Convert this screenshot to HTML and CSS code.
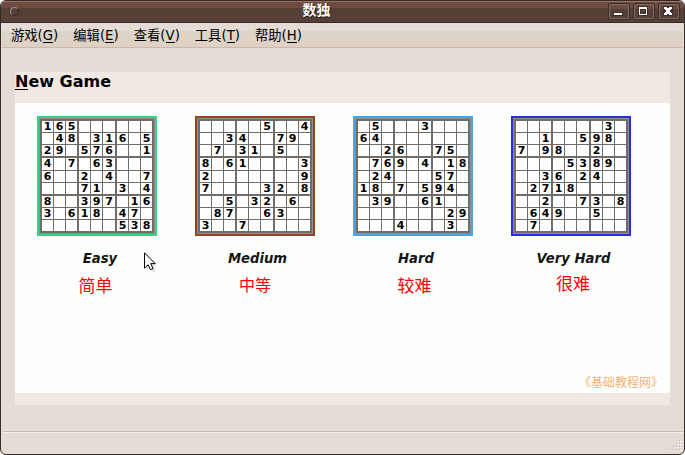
FILE: index.html
```html
<!DOCTYPE html>
<html lang="zh-CN">
<head>
<meta charset="utf-8">
<title>数独</title>
<link rel="stylesheet" href="styles.css">
</head>
<body>
<div class="window">
  <header class="titlebar">
    <span class="window-menu"></span>
    <span class="title">数独</span>
    <div class="controls">
      <span class="control"><svg width="20" height="15" shape-rendering="crispEdges"><path d="M4 8h10v4H4z" fill="#3c302c"/><path d="M5 9h8v2H5z" fill="#fff"/></svg></span>
      <span class="control"><svg width="20" height="15" shape-rendering="crispEdges"><path d="M4 2h10v10H4z" fill="#3c302c"/><path d="M5 3h8v8H5zM6 5v5h6V5z" fill="#fff" fill-rule="evenodd"/><path d="M7 6h4v3H7z" fill="#564038"/></svg></span>
      <span class="control"><svg width="20" height="15" shape-rendering="crispEdges"><path d="M4 2h10v10H4z" fill="#3c302c"/><path d="M5 3h3v1h2V3h3v2h-1v1h-1v2h1v1h1v2h-3v-1H8v1H5V9h1V8h1V6H6V5H5z" fill="#fff"/></svg></span>
    </div>
  </header>
  <nav class="menubar">
    <span class="menu">游戏<span class="key">(<u>G</u>)</span></span>
    <span class="menu">编辑<span class="key">(<u>E</u>)</span></span>
    <span class="menu">查看<span class="key">(<u>V</u>)</span></span>
    <span class="menu">工具<span class="key">(<u>T</u>)</span></span>
    <span class="menu">帮助<span class="key">(<u>H</u>)</span></span>
  </nav>
  <main class="panel">
    <h1 class="heading"><u>N</u>ew Game</h1>
    <section class="levels">
      <div class="level easy"><div class="board" data-puzzle="165......|.48.316.5|29.576..1|4.7.63...|6..2.4..7|...71.3.4|8..397.16|3.618.47.|......538"></div><span class="name">Easy</span><span class="note">简单</span></div>
      <div class="level medium"><div class="board" data-puzzle=".....5..4|..34..79.|.7.31.5..|8.61....3|2.......9|7....32.8|..5.32.6.|.87..63..|3..7....."></div><span class="name">Medium</span><span class="note">中等</span></div>
      <div class="level hard"><div class="board" data-puzzle=".5...3...|64.......|..26..75.|.769.4.18|.24...57.|18.7.594.|.39..61..|.......29|...4...3."></div><span class="name">Hard</span><span class="note">较难</span></div>
      <div class="level very-hard"><div class="board" data-puzzle=".......3.|..1..598.|7.98..2..|....5389.|..36.24..|.2718....|..2..73.8|.649..5..|.7......."></div><span class="name">Very Hard</span><span class="note">很难</span></div>
      <span class="credit">《基础教程网》</span>
    </section>
  </main>
  <footer class="statusbar">
    <svg class="grip" width="12" height="12" shape-rendering="crispEdges"><path d="M9 0h1v1h-1zM6 3h1v1H6zM9 3h1v1H9zM3 6h1v1H3zM6 6h1v1H6zM9 6h1v1H9zM0 9h1v1H0zM3 9h1v1H3zM6 9h1v1H6zM9 9h1v1H9z" fill="#bdb1a9"/><path d="M10 1h1v1h-1zM7 4h1v1H7zM10 4h1v1h-1zM4 7h1v1H4zM7 7h1v1H7zM10 7h1v1h-1zM1 10h1v1H1zM4 10h1v1H4zM7 10h1v1H7zM10 10h1v1h-1z" fill="#fff"/></svg>
  </footer>
</div>
<svg class="pointer" width="14" height="20"><path d="M2.500 2.500v15l3.500-3 2.500 5h3l-2.500-6h4z" fill="#aaa" opacity=".45"/><path d="M.5.8v15.400l3.600-3.500 2.400 5 2.500-1.200-2.300-4.900h4.500z" fill="#fff" stroke="#000"/></svg>
<script src="app.js"></script>
</body>
</html>
```
FILE: styles.css
```css
* { box-sizing: border-box; }
body {
  margin: 0;
  background: #fff;
  color: #000;
  font-family: "DejaVu Sans", "Noto Sans CJK SC", sans-serif;
}
u { text-decoration: none; border-bottom: 1px solid currentColor; }
.window {
  width: 685px;
  height: 455px;
  display: flex;
  flex-direction: column;
  overflow: hidden;
  border: 1px solid #352b2a;
  border-radius: 6px;
  background: #e5dcd6;
}
.titlebar {
  height: 22px;
  flex: none;
  display: grid;
  grid-template-columns: 80px 1fr 80px;
  border-top: 1px solid #9b7065;
  border-bottom: 1px solid #352b2a;
  background: linear-gradient(#6f4c41 0 6px, #553f37 6px);
}
.window-menu {
  width: 9px;
  height: 9px;
  margin: 5px 0 0 9px;
  border: 1px solid;
  border-color: #a39087 #3e2d28 #3e2d28 #a39087;
  border-radius: 50%;
}
.title {
  padding-right: 52px;
  text-align: center;
  font-size: 14px;
  line-height: 17px;
  font-weight: 700;
  color: #fff;
  text-shadow: 1px 1px 0 #241b18;
}
.controls { display: flex; gap: 3px; justify-content: flex-end; padding: 1px 4px 0 0; }
.control {
  width: 22px;
  height: 17px;
  border: 1px solid #352b2a;
  border-radius: 2px;
  box-shadow: inset 0 0 0 1px #806b63;
  background: linear-gradient(#6f4c41 0 5px, #553f37 5px);
}
.control svg { display: block; }
.menubar {
  height: 25px;
  flex: none;
  display: flex;
  gap: 15px;
  padding-left: 9px;
  margin: 0 1px;
  border-bottom: 1px solid #cbb9ae;
  background: linear-gradient(#e5dcd6 0 8px, #dcd5cb 8px, #dfd2c5 20px);
}
.menu { font-size: 13.3px; line-height: 25px; white-space: nowrap; }
.menu u { display: inline-block; line-height: 13px; }
.panel {
  width: 655px;
  height: 333px;
  flex: none;
  margin: 24px 0 0 14px;
  background: #f0e8e2;
}
.heading {
  height: 31px;
  margin: 0;
  font-size: 16px;
  line-height: 19px;
  font-weight: 700;
}
.heading u { display: inline-block; line-height: 15px; }
.levels {
  height: 290px;
  position: relative;
  display: flex;
  gap: 38px;
  padding: 13px 0 0 22px;
  background: #fdfffc;
}
.level { width: 120px; display: flex; flex-direction: column; align-items: center; }
.board {
  width: 120px;
  height: 120px;
  display: grid;
  grid-template-columns: 12px 12px 13px 12px 12px 14px 12px 12px 12px;
  grid-template-rows: 12px 12px 13px 13px 12px 13px 12px 12px 12px;
  padding: 3px 0 0 3px;
  border: 2px solid;
  background: #726c69;
  box-shadow: inset 0 0 0 1px #918e8b;
}
.easy .board { border-color: #35d286; }
.medium .board { border-color: #8d471b; }
.hard .board { border-color: #42a5ee; }
.very-hard .board { border-color: #292ddc; }
.cell {
  margin: 0 1px 1px 0;
  background: #fff;
  font-size: 11px;
  line-height: 12px;
  font-weight: 700;
  display: flex;
  justify-content: center;
}
.cell:nth-child(9n+3), .cell:nth-child(9n+6) { margin-right: 2px; }
.cell:nth-child(n+19):nth-child(-n+27), .cell:nth-child(n+46):nth-child(-n+54) { margin-bottom: 2px; }
.name {
  margin: 13px 0 0 6px;
  font-size: 13.2px;
  line-height: 20px;
  font-weight: 700;
  font-style: oblique;
  color: #151515;
  white-space: nowrap;
}
.very-hard .name, .medium .name { margin-left: 5px; }
.note {
  margin: 6px 3px 0 0;
  color: #f00;
  font-size: 17px;
  line-height: 22px;
}
.medium .note { margin-right: 0; font-size: 16px; }
.hard .note { margin-left: 6px; }
.very-hard .note { margin: 4px 0 0 4px; }
.credit {
  position: absolute;
  right: 7px;
  bottom: 0;
  color: #f5b077;
  font-size: 12px;
  line-height: 20px;
}
.statusbar {
  flex: 1;
  display: flex;
  justify-content: flex-end;
  align-items: flex-end;
  margin: 26px 1px 0 2px;
  border-top: 1px solid #c8bbb1;
  box-shadow: inset 0 1px #f5efeb;
  padding: 0 1px 2px 0;
}
.pointer { position: absolute; left: 144px; top: 252px; }
```
FILE: app.js
```js
document.querySelectorAll(".board").forEach((board) => {
  for (const digit of board.dataset.puzzle.replaceAll("|", "")) {
    const cell = document.createElement("span");
    cell.className = "cell";
    cell.textContent = digit === "." ? "" : digit;
    board.append(cell);
  }
});
```
